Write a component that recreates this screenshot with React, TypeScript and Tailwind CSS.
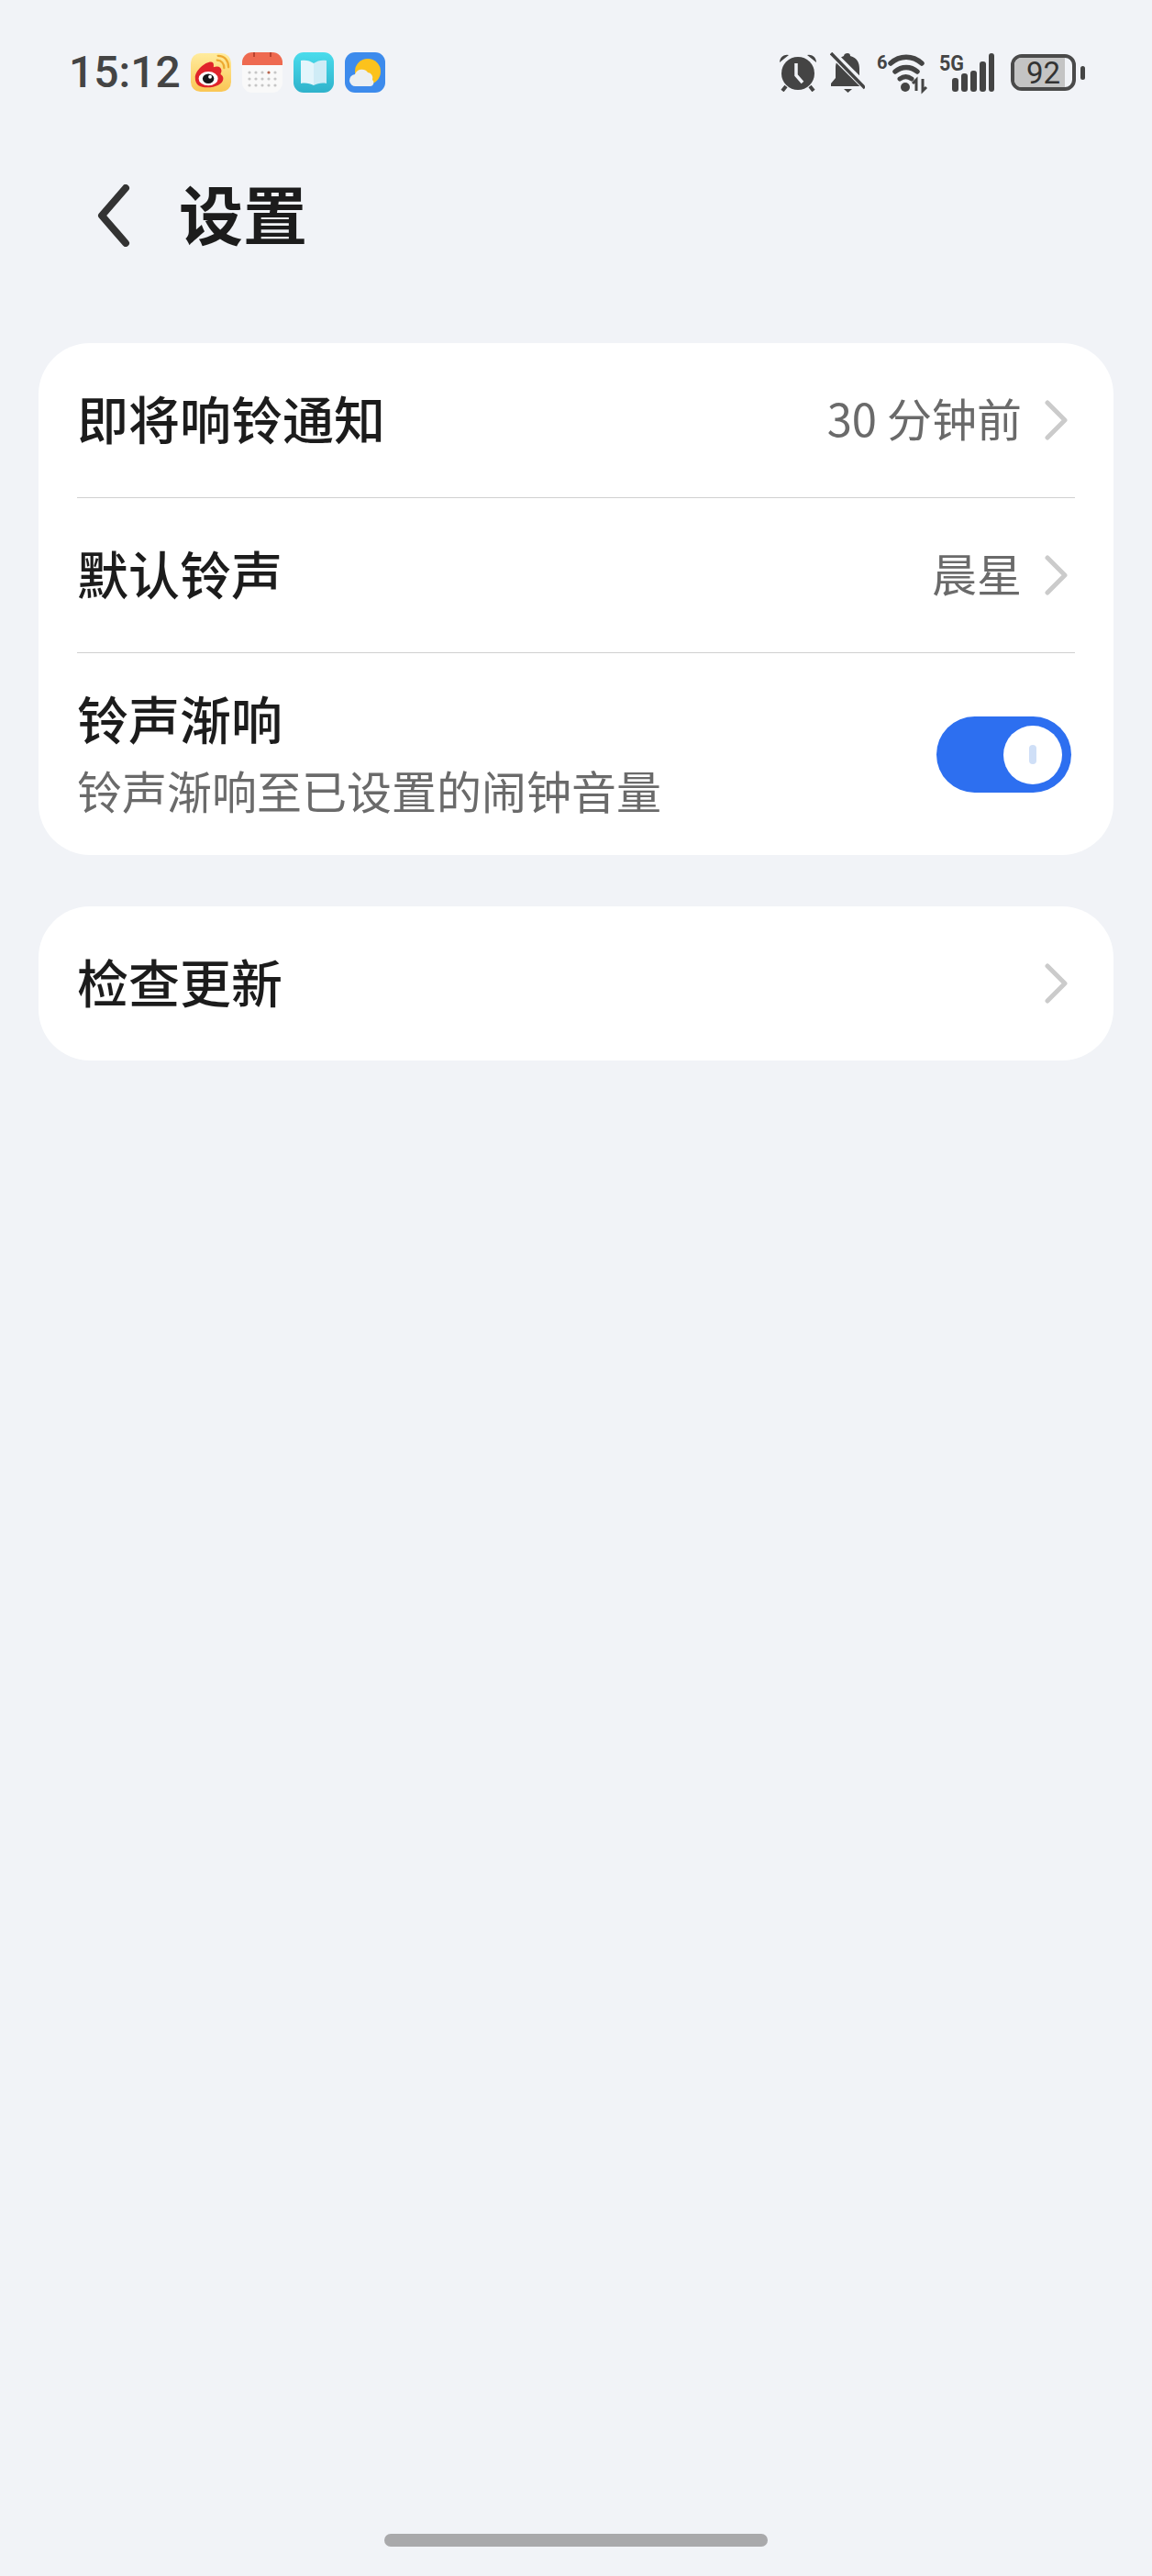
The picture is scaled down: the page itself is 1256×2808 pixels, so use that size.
const cjk = "font-['Noto_Sans_CJK_SC','Noto_Sans',sans-serif]";

function Chevron() {
  return (
    <svg width="26" height="44" viewBox="0 0 26 44" fill="none" className="shrink-0">
      <path d="M3 3 L22 22 L3 41" stroke="#cbcbcb" strokeWidth="5" strokeLinecap="round" strokeLinejoin="round" />
    </svg>
  );
}

function Weibo() {
  return (
    <svg width="44" height="44" viewBox="0 0 46 44">
      <defs>
        <linearGradient id="wb" x1="0" y1="0" x2="0" y2="1">
          <stop offset="0" stopColor="#ffec9e" />
          <stop offset="1" stopColor="#fac654" />
        </linearGradient>
      </defs>
      <rect width="46" height="44" rx="11" fill="url(#wb)" />
      <path d="M5 28c0-8 11-18 18-18 4 0 3 5 3 6 5-2 9 0 9 4 0 2-1 3-1 4 2 1 3 3 3 5 0 6-9 10-18 10S5 36 5 28z" fill="#e0232b" />
      <ellipse cx="20" cy="29" rx="11" ry="8" fill="#fff" />
      <ellipse cx="20" cy="29" rx="6.5" ry="5.5" fill="#17171a" />
      <circle cx="22" cy="27" r="2" fill="#fff" />
      <path d="M30 8c5 0 8 4 8 9M31 3c8 0 12 6 12 13" stroke="#eda92f" strokeWidth="2.4" fill="none" strokeLinecap="round" />
    </svg>
  );
}

function CalendarApp() {
  const dots = [];
  for (let r = 0; r < 3; r++) {
    for (let c = 0; c < 5; c++) {
      dots.push(<circle key={`${r}-${c}`} cx={8 + c * 7} cy={22 + r * 7} r="1.6" fill={r === 0 && c === 3 ? "#b8644c" : "#c6c6c6"} />);
    }
  }
  return (
    <svg width="44" height="44" viewBox="0 0 44 44">
      <rect width="44" height="44" rx="11" fill="#f9f9f9" />
      <path d="M0 14V11A11 11 0 0 1 11 0H33A11 11 0 0 1 44 11V14Z" fill="#ee6a50" />
      <path d="M13 0v5M31 0v5" stroke="#b9432f" strokeWidth="2" />
      {dots}
    </svg>
  );
}

function BookApp() {
  return (
    <svg width="44" height="44" viewBox="0 0 44 44">
      <defs>
        <linearGradient id="bk" x1="0" y1="0" x2="0" y2="1">
          <stop offset="0" stopColor="#4adcec" />
          <stop offset="1" stopColor="#2fb2cb" />
        </linearGradient>
      </defs>
      <rect width="44" height="44" rx="11" fill="url(#bk)" />
      <path d="M8 9c5-1 10 0 14 3v24c-4-2-9-3-14-2z" fill="#e4f5fb" />
      <path d="M36 9c-5-1-10 0-14 3v24c4-2 9-3 14-2z" fill="#cfecf6" />
    </svg>
  );
}

function WeatherApp() {
  return (
    <svg width="44" height="44" viewBox="0 0 44 44">
      <rect width="44" height="44" rx="11" fill="#3d8bec" />
      <circle cx="25" cy="21" r="14" fill="#fcc21c" />
      <path d="M12 37a6.5 6.5 0 0 1-1-13 8 8 0 0 1 14-2 6 6 0 0 1 5 8 4 4 0 0 1-2 7z" fill="#ebeff2" />
    </svg>
  );
}

function StatusIcons() {
  return (
    <div className="flex items-center">
      <svg width="42" height="42" viewBox="0 0 42 42" fill="#444">
        <circle cx="21" cy="22" r="18" />
        <path d="M1 10a8 8 0 0 1 10-8zM41 10a8 8 0 0 0-10-8z" />
        <path d="M8 36l-4 5M34 36l4 5" stroke="#444" strokeWidth="4" />
        <path d="M19 11v13l7 8" stroke="#f1f3f7" strokeWidth="3.5" fill="none" />
      </svg>
      <svg width="38" height="44" viewBox="0 0 38 44" fill="#444" className="ml-[14px]">
        <path d="M19 1c2 0 3 1 3 3 8 2 10 8 10 14v11l4 5v3H1v-3l5-6V16c0-5 3-10 9-12 0-2 2-3 4-3z" />
        <path d="M15 40h9l-4.500 4z" />
        <path d="M1 0l37 37" stroke="#f1f3f7" strokeWidth="8" />
        <path d="M1 1l37 38" stroke="#444" strokeWidth="3.5" />
      </svg>
      <svg width="56" height="42" viewBox="0 0 56 42" className="ml-[13px] overflow-visible" fill="none">
        <text x="0" y="17" fontSize="20" fontWeight="700" fill="#444" fontFamily="Roboto, sans-serif">6</text>
        <path d="M15 11c10-9 24-9 34 0" stroke="#444" strokeWidth="5.500" strokeLinecap="round" />
        <path d="M20 20c7-6 17-6 24 0" stroke="#444" strokeWidth="5.500" strokeLinecap="round" />
        <path d="M25 28c4-3 9-3 13 0" stroke="#444" strokeWidth="5" strokeLinecap="round" />
        <circle cx="31" cy="37" r="5" fill="#444" />
        <path d="M43 41V29l-4 4M50 28v13l4-4" stroke="#444" strokeWidth="3" />
      </svg>
      <svg width="60" height="42" viewBox="0 0 60 42" className="ml-[12px] overflow-visible" fill="#444">
        <text x="0" y="19" fontSize="23" fontWeight="700" textLength="27" lengthAdjust="spacingAndGlyphs" fontFamily="Roboto, sans-serif">5G</text>
        <rect x="14" y="27" width="7" height="15" rx="3" />
        <rect x="24" y="22" width="7" height="20" rx="3" />
        <rect x="34" y="19" width="7" height="23" rx="3" />
        <rect x="44" y="9" width="7" height="33" rx="3" />
        <rect x="54" y="0" width="6" height="42" rx="3" />
      </svg>
      <div className="relative ml-[18px] w-[71px] h-[40px] rounded-[12px] border-[4px] border-[#4a4a4a] overflow-hidden flex items-center justify-center">
        <div className="absolute left-0 top-0 bottom-0 w-[55px] bg-[#c4c4c4]" />
        <span className="relative font-['Roboto',sans-serif] text-[33px] leading-none text-[#333]">92</span>
      </div>
      <div className="ml-[5px] w-[5px] h-[15px] rounded-[3px] bg-[#444]" />
    </div>
  );
}

function Row({ title, value }: { title: string; value?: string }) {
  return (
    <div className="h-[168px] flex items-center justify-between pl-[42px] pr-[49px]">
      <span className="pb-[7px] text-[56px] leading-none font-medium text-[#1c1c1c]">{title}</span>
      <div className="flex items-center gap-[25px]">
        {value && <span className="pb-[7px] text-[49px] leading-none text-[#6a6a6a]">{value}</span>}
        <Chevron />
      </div>
    </div>
  );
}

export default function App() {
  return (
    <div className={`w-[1256px] h-[2808px] bg-[#f1f3f7] flex flex-col ${cjk}`}>
      <div className="h-[158px] pl-[75px] pr-[73px] flex items-center justify-between shrink-0">
        <div className="flex items-center">
          <span className="font-['Roboto',sans-serif] font-medium text-[48px] leading-none text-[#444] w-[120px]">15:12</span>
          <div className="flex items-center gap-[12px] ml-[13px]">
            <Weibo />
            <CalendarApp />
            <BookApp />
            <WeatherApp />
          </div>
        </div>
        <StatusIcons />
      </div>

      <div className="h-[110px] mt-[22px] pl-[104px] flex items-center shrink-0">
        <svg width="40" height="68" viewBox="0 0 40 68" fill="none">
          <path d="M33 4 L7 34 L33 64" stroke="#333" strokeWidth="8" strokeLinecap="round" strokeLinejoin="round" />
        </svg>
        <span className="ml-[51px] pb-[7px] text-[70px] leading-none font-bold text-[#1c1c1c]">设置</span>
      </div>

      <div className="mt-[84px] mx-[42px] bg-white rounded-[56px] shrink-0">
        <Row title="即将响铃通知" value="30 分钟前" />
        <div className="h-[1px] mx-[42px] bg-[#d0d0d0]" />
        <Row title="默认铃声" value="晨星" />
        <div className="h-[1px] mx-[42px] bg-[#d0d0d0]" />
        <div className="h-[220px] flex items-center justify-between pl-[42px] pr-[46px]">
          <div className="pb-[7px]">
            <div className="text-[56px] leading-[70px] font-medium text-[#1c1c1c]">铃声渐响</div>
            <div className="mt-[14px] text-[49px] leading-[60px] text-[#6a6a6a]">铃声渐响至已设置的闹钟音量</div>
          </div>
          <div className="relative w-[147px] h-[83px] rounded-full bg-[#2d6ff0]">
            <div className="absolute right-[10px] top-[10px] w-[64px] h-[64px] rounded-full bg-white flex items-center justify-center">
              <div className="w-[8px] h-[21px] rounded-[4px] bg-[#cfdff7]" />
            </div>
          </div>
        </div>
      </div>

      <div className="mt-[56px] mx-[42px] bg-white rounded-[56px] shrink-0">
        <Row title="检查更新" />
      </div>

      <div className="mt-auto mb-[32px] mx-auto w-[418px] h-[14px] rounded-full bg-[#a9a9ab] shrink-0" />
    </div>
  );
}
